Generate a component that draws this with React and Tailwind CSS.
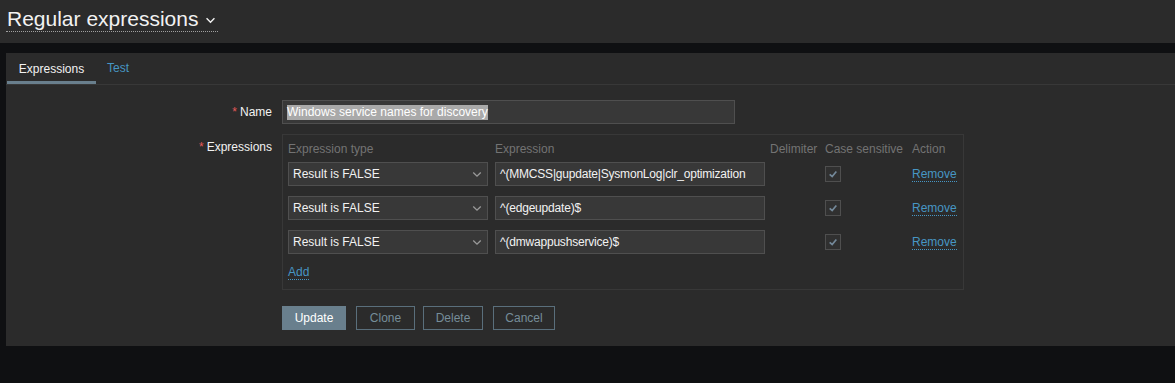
import React from 'react';

const rows = [
  '^(MMCSS|gupdate|SysmonLog|clr_optimization',
  '^(edgeupdate)$',
  '^(dmwappushservice)$',
];

function Chevron({ className }) {
  return (
    <svg viewBox="0 0 12 8" className={className} fill="none" stroke="currentColor" strokeWidth="1.6">
      <polyline points="1.5,1.5 6,6 10.5,1.5" />
    </svg>
  );
}

function ExprRow({ value }) {
  return (
    <div className="flex items-center h-[24px]">
      <div className="w-[207px] shrink-0">
        <div className="w-[200px] h-[24px] bg-[#383838] border border-[#4f4f4f] flex items-center justify-between pl-[4px] pr-[5px] text-[#f2f2f2]">
          <span>Result is FALSE</span>
          <Chevron className="w-[10px] h-[7px] text-[#9a9a9a]" />
        </div>
      </div>
      <div className="w-[275px] shrink-0">
        <div className="w-[270px] h-[24px] bg-[#383838] border border-[#4f4f4f] flex items-center px-[4px] overflow-hidden whitespace-nowrap text-[#f2f2f2] tracking-[-0.2px]">
          {value}
        </div>
      </div>
      <div className="w-[55px] shrink-0" />
      <div className="w-[87px] shrink-0 flex items-center">
        <div className="w-[16px] h-[16px] border border-[#4f4f4f] bg-[#303030] flex items-center justify-center">
          <svg viewBox="0 0 12 12" className="w-[10px] h-[10px]" fill="none" stroke="#74899a" strokeWidth="2">
            <polyline points="2,6.5 5,9 10,3" />
          </svg>
        </div>
      </div>
      <div className="w-[45px] shrink-0">
        <span className="text-[#4796c4] border-b border-dotted border-[#4796c4] leading-[14px]">Remove</span>
      </div>
    </div>
  );
}

export default function App() {
  return (
    <div className="w-[1175px] h-[383px] bg-[#0f1012] text-[12px] overflow-hidden" style={{ fontFamily: '"Liberation Sans", Arial, sans-serif' }}>
      {/* header */}
      <div className="h-[43px] bg-[#2b2b2b] pl-[6px] pt-[8px]">
        <div className="inline-flex items-center gap-[7px] border-b border-dotted border-[#a0a0a0] pb-[1px] text-[#f2f2f2]">
          <span className="text-[21px] leading-[22px] pl-px">Regular expressions</span>
          <Chevron className="w-[11px] h-[7px] mt-[3px] mr-[2px]" />
        </div>
      </div>

      {/* panel */}
      <div className="mt-[10px] ml-[6px] bg-[#2b2b2b] h-[293px]">
        <div className="flex h-[32px] border-b border-[#383838]">
          <div className="ml-px w-[89px] flex items-center justify-center text-[#f2f2f2] border-b-[3px] border-[#697f8d] pt-[3px]">
            Expressions
          </div>
          <div className="px-[11px] flex items-center text-[#4796c4] pb-[1px]">Test</div>
        </div>

        <div className="pt-[15px]">
          {/* Name */}
          <div className="flex items-center h-[24px]">
            <div className="w-[276px] text-right pr-[10px] text-[#f2f2f2]">
              <span className="text-[#e45959] mr-[3px]">*</span>Name
            </div>
            <div className="w-[453px] h-[24px] bg-[#383838] border border-[#4f4f4f] flex items-center px-[4px]">
              <span className="bg-[#a9a9a9] text-white leading-[15px]">Windows service names for discovery</span>
            </div>
          </div>

          {/* Expressions */}
          <div className="flex mt-[10px]">
            <div className="w-[276px] text-right pr-[10px] text-[#f2f2f2] pt-[4px]">
              <span className="text-[#e45959] mr-[3px]">*</span>Expressions
            </div>
            <div className="w-[682px] border border-[#383838] p-[5px]">
              <div className="flex h-[22px] items-center text-[#737373] pb-[5px]">
                <div className="w-[207px]">Expression type</div>
                <div className="w-[275px]">Expression</div>
                <div className="w-[55px]">Delimiter</div>
                <div className="w-[87px]">Case sensitive</div>
                <div className="w-[45px]">Action</div>
              </div>
              <div className="flex flex-col gap-[10px]">
                {rows.map((r) => (
                  <ExprRow key={r} value={r} />
                ))}
              </div>
              <div className="mt-[9px] h-[21px]">
                <span className="text-[#4796c4] border-b border-dotted border-[#4796c4] leading-[14px]">Add</span>
              </div>
            </div>
          </div>

          {/* buttons */}
          <div className="flex mt-[16px] ml-[276px]">
            <button className="h-[24px] w-[64px] bg-[#697f8d] text-white border border-[#697f8d]">Update</button>
            <button className="ml-[10px] h-[24px] w-[59px] border border-[#5a6f7c] text-[#768d99]">Clone</button>
            <button className="ml-[8px] h-[24px] w-[60px] border border-[#5a6f7c] text-[#768d99]">Delete</button>
            <button className="ml-[10px] h-[24px] w-[62px] border border-[#5a6f7c] text-[#768d99]">Cancel</button>
          </div>
        </div>
      </div>
    </div>
  );
}
